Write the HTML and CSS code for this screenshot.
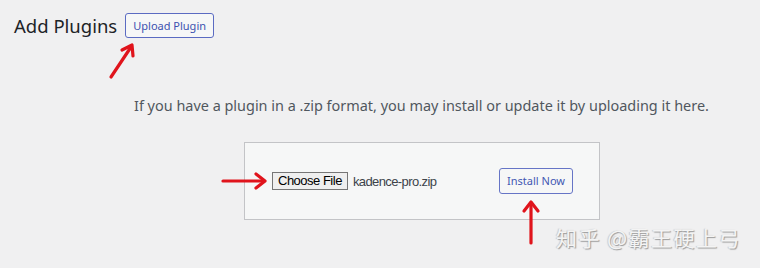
FILE: index.html
```html
<html>
<head>
    <title>Add Plugins</title>
    <link rel="stylesheet" href="styles.css">
</head>
<body>
<main class="page">
    <div class="page-head">
        <h1 class="page-title">Add Plugins</h1>
        <a href="#" class="head-button">Upload Plugin</a>
    </div>
    <p class="upload-help">If you have a plugin in a .zip format, you may install or update it by uploading it here.</p>
    <form class="upload-form">
        <div class="file-field">
            <span class="file-button">Choose File</span>
            <span class="file-name">kadence-pro.zip</span>
        </div>
        <button type="button" class="install-button">Install Now</button>
    </form>

    <svg class="marks" width="760" height="268" viewBox="0 0 760 268">
        <g stroke="#e0141c" stroke-width="3.2" fill="none" stroke-linecap="round" stroke-linejoin="round">
            <path d="M111 77 L131 47"/>
            <path d="M122 50 L132 45 L133 56"/>
            <path d="M223 181 L264 181"/>
            <path d="M256 174 L265 181 L256 188"/>
            <path d="M531 243 L531 203"/>
            <path d="M524 211 L531 202 L538 211"/>
        </g>
    </svg>
    <div class="watermark">知乎 @霸王硬上弓</div>
</main>
</body>
</html>
```

FILE: styles.css
```css
body {
    margin: 0;
    background-color: #f0f0f1;
    font-family: "Noto Sans", "Open Sans", sans-serif;
    color: #1d2327;
}

.page {
    position: relative;
    width: 760px;
    height: 268px;
    overflow: hidden;
}

.page-head {
    display: flex;
    align-items: center;
    gap: 8px;
    padding: 13px 0 0 14px;
}

.page-title {
    margin: 0;
    font-size: 18.5px;
    font-weight: 400;
    line-height: 25px;
}

.head-button {
    display: inline-block;
    box-sizing: border-box;
    height: 25px;
    padding: 0 7px;
    border: 1px solid #5b6bc2;
    border-radius: 3px;
    background-color: #f6f7f7;
    color: #3d52b0;
    font-size: 11px;
    line-height: 23px;
    text-decoration: none;
}

.upload-help {
    margin: 58px 0 0 134px;
    font-size: 14.45px;
    line-height: 20px;
    color: #50575e;
}

.upload-form {
    display: flex;
    align-items: center;
    justify-content: space-between;
    box-sizing: border-box;
    width: 356px;
    height: 78px;
    margin: 26px 0 0 244px;
    padding: 0 26px 0 27px;
    border: 1px solid #c3c4c7;
    background-color: #f6f7f7;
}

.file-field {
    display: flex;
    align-items: center;
    gap: 5px;
    font-family: "Liberation Sans", Arial, sans-serif;
    font-size: 13px;
}

.file-button {
    box-sizing: border-box;
    height: 18px;
    padding: 0 5px;
    border: 1px solid #767676;
    background-color: #efefef;
    color: #000;
    letter-spacing: -0.5px;
    line-height: 16px;
}

.file-name {
    color: #3c434a;
    letter-spacing: -0.6px;
}

.install-button {
    box-sizing: border-box;
    height: 26px;
    padding: 0 7px;
    border: 1px solid #6675c6;
    border-radius: 3px;
    background-color: #f6f7f7;
    color: #4357b3;
    font-family: "Noto Sans", "Open Sans", sans-serif;
    font-size: 11px;
    line-height: 24px;
}

.marks {
    position: absolute;
    top: 0;
    left: 0;
}

.watermark {
    position: absolute;
    top: 222px;
    left: 556px;
    font-family: "Noto Sans CJK SC", sans-serif;
    font-size: 21px;
    letter-spacing: 1.5px;
    color: #f4f4f4;
    text-shadow: 1px 1px 1px #9a9a9a, -1px 0 1px #c8c8c8;
}
```
